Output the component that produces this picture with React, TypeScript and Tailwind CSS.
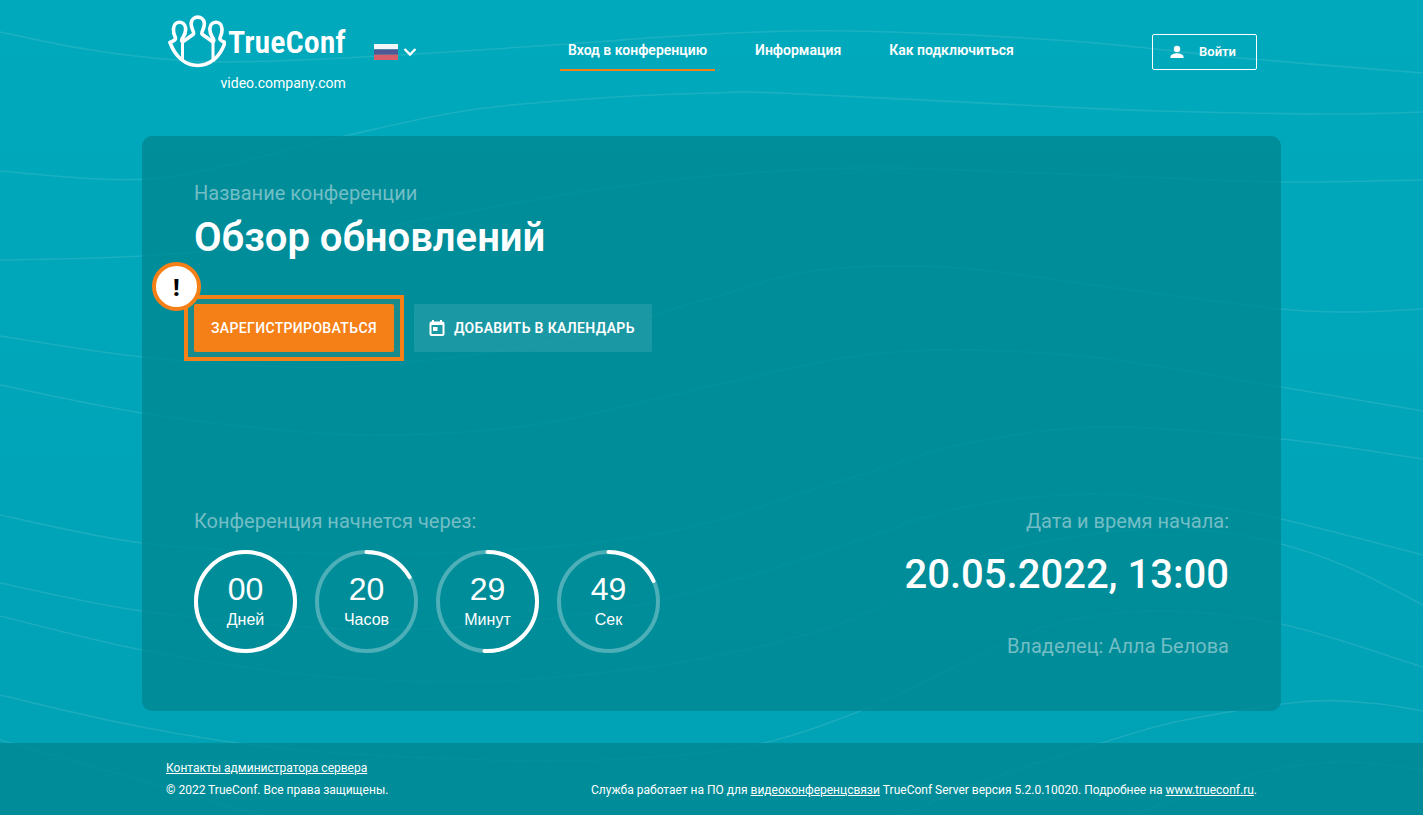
import React from "react";

type Point = [number, number];

const WAVES: Point[][] = [
  [[0, 32], [91, 50], [190, 61], [272, 61], [400, 55], [568, 44], [712, 34], [850, 31], [1070, 41], [1240, 58], [1423, 73]],
  [[0, 171], [97, 179], [160, 178], [220, 167], [345, 136], [470, 110], [600, 98], [711, 93], [780, 93], [1040, 106], [1160, 111], [1330, 114], [1423, 112]],
  [[0, 260], [142, 256], [290, 242], [450, 215], [580, 192], [711, 176], [850, 168], [960, 170], [1140, 177], [1281, 182], [1423, 180]],
  [[0, 336], [142, 357], [300, 367], [420, 361], [560, 340], [711, 298], [800, 273], [890, 266], [980, 270], [1130, 290], [1281, 309], [1350, 312], [1423, 309]],
  [[0, 385], [142, 413], [280, 430], [400, 435], [540, 424], [711, 386], [850, 357], [960, 350], [1100, 358], [1281, 387], [1423, 411]],
  [[0, 515], [142, 543], [300, 553], [450, 553], [600, 542], [711, 522], [850, 478], [960, 445], [1100, 427], [1281, 439], [1423, 459]],
  [[0, 583], [142, 611], [320, 628], [450, 628], [600, 612], [711, 587], [830, 550], [960, 508], [1100, 494], [1200, 505], [1281, 519], [1423, 555]],
  [[0, 616], [142, 650], [300, 674], [450, 682], [570, 676], [711, 657], [850, 620], [970, 560], [1100, 533], [1200, 530], [1281, 544], [1350, 568], [1423, 605]],
  [[0, 695], [142, 727], [300, 750], [530, 761], [680, 755], [768, 742], [860, 711], [960, 665], [1050, 625], [1160, 611], [1281, 624], [1423, 667]],
  [[0, 740], [140, 780], [260, 815]],
  [[900, 815], [1000, 775], [1105, 742], [1180, 721], [1300, 702], [1370, 703], [1423, 711]],
  [[1130, 815], [1250, 775], [1340, 762], [1423, 770]],
];

function smoothPath(points: Point[]): string {
  let d = `M${points[0][0]} ${points[0][1]}`;
  for (let i = 0; i < points.length - 1; i++) {
    const a = points[Math.max(i - 1, 0)];
    const b = points[i];
    const c = points[i + 1];
    const e = points[Math.min(i + 2, points.length - 1)];
    d += `C${b[0] + (c[0] - a[0]) / 6} ${b[1] + (c[1] - a[1]) / 6} ${c[0] - (e[0] - b[0]) / 6} ${c[1] - (e[1] - b[1]) / 6} ${c[0]} ${c[1]}`;
  }
  return d;
}

function Waves() {
  return (
    <svg
      className="absolute inset-0 -z-10 h-full w-full"
      viewBox="0 0 1423 815"
      preserveAspectRatio="none"
      fill="none"
      stroke="#ffffff"
      strokeOpacity="0.1"
      strokeWidth="1.6"
      aria-hidden="true"
    >
      {WAVES.map((points, i) => (
        <path key={i} d={smoothPath(points)} />
      ))}
    </svg>
  );
}

function LogoMark() {
  return (
    <svg className="h-[54px] w-[60px]" viewBox="0 0 60 54" fill="none" stroke="#fff" strokeWidth="3.6" strokeLinejoin="round" aria-hidden="true">
      <path d="M16.500 27V46.500M47 27V46.500" strokeWidth="3" />
      <path d="M27 19.500 16.500 27C14.500 25 16 23.500 17.500 21.500C19.500 18.500 19.800 15 19.500 12.500C18.500 5.500 8.500 5.500 7.700 12.500C7.300 15 7.500 18.500 9 21.500C10.500 24.500 8.500 25.500 4 27.500C9.500 42 19.500 50.500 31.700 50.500C44 50.500 54 42 59 27.500C54.500 25.500 53 24.500 54.500 21.500C56 18.500 56.200 15 55.800 12.500C55 5.500 45 5.500 44 12.500C43.700 15 44 18.500 46 21.500C47.500 23.500 49 25 47 27L36.500 19.500C35 18.500 36 17 37 14.500C38 12 38.500 10 38.300 8C37.500 0.200 26 0.200 25.200 8C25 10 25.500 12 26.500 14.500C27.500 17 28.500 18.500 27 19.500Z" />
    </svg>
  );
}

function Header() {
  return (
    <header className="mx-auto flex w-full max-w-[1091px] items-start justify-between pt-3">
      <div className="flex items-start gap-7">
        <div className="flex flex-col items-end">
          <a href="#home" className="flex h-[59px] items-center gap-0.5 text-white">
            <LogoMark />
            <span className="font-['Roboto_Condensed','Liberation_Sans_Narrow',Roboto,sans-serif] text-[32px] font-semibold">TrueConf</span>
          </a>
          <span className="text-sm leading-6 text-white">video.company.com</span>
        </div>
        <button type="button" aria-label="Русский" className="mt-8 flex items-center gap-1 pr-3">
          <svg className="h-4 w-6" viewBox="0 0 24 16" aria-hidden="true">
            <path fill="#f2f6f6" d="M0 0h24v5.400H0z" />
            <path fill="#4d5a96" d="M0 5.400h24v5.200H0z" />
            <path fill="#d85f69" d="M0 10.600h24V16H0z" />
          </svg>
          <svg className="h-4 w-4" viewBox="0 0 16 16" fill="none" stroke="#fff" strokeWidth="2.400" aria-hidden="true">
            <path d="m2.500 5 5.500 5.500L13.500 5" />
          </svg>
        </button>
      </div>
      <nav className="flex gap-8 pt-7 text-sm font-semibold text-white">
        <a href="#join" className="border-b-2 border-[#f58018] px-2 pb-[9px]">Вход в конференцию</a>
        <a href="#info" className="px-2">Информация</a>
        <a href="#help" className="px-2">Как подключиться</a>
      </nav>
      <button type="button" className="mt-[22px] flex h-9 items-center gap-3.5 rounded-[2px] border border-white pr-5 pl-4 text-[13px] font-semibold text-white">
        <svg className="h-4 w-4" viewBox="0 0 16 16" fill="#fff" aria-hidden="true">
          <circle cx="8" cy="5" r="3.200" />
          <path d="M1.500 14v-1.500C1.500 10.500 5 9.200 8 9.200s6.500 1.300 6.500 3.300V14z" />
        </svg>
        Войти
      </button>
    </header>
  );
}

const TIMERS = [
  { value: "00", label: "Дней", fraction: 1 },
  { value: "20", label: "Часов", fraction: 0.168 },
  { value: "29", label: "Минут", fraction: 0.51 },
  { value: "49", label: "Сек", fraction: 0.182 },
];

function Timer({ value, label, fraction }: { value: string; label: string; fraction: number }) {
  return (
    <div className="relative flex h-[103px] w-[103px] flex-col items-center justify-center font-['Liberation_Sans',sans-serif] text-white">
      <svg className="absolute inset-0" viewBox="0 0 103 103" fill="none" strokeWidth="4" aria-hidden="true">
        <circle cx="51.500" cy="51.500" r="49.500" stroke="#fff" strokeOpacity="0.3" />
        <circle
          cx="51.500"
          cy="51.500"
          r="49.500"
          stroke="#fff"
          strokeLinecap="round"
          pathLength={100}
          strokeDasharray={`${fraction * 100} 100`}
          transform="rotate(-90 51.500 51.500)"
        />
      </svg>
      <span className="text-[32px] leading-9">{value}</span>
      <span className="text-base leading-[26px]">{label}</span>
    </div>
  );
}

function ConferenceCard() {
  return (
    <main className="mx-auto mt-[41px] flex w-full max-w-[1139px] grow flex-col justify-between rounded-[10px] bg-[#008792]/80 px-[52px] pt-[43px] pb-[51px]">
      <section>
        <p className="text-xl leading-7 text-[#73bec5]">Название конференции</p>
        <h1 className="mt-1.5 text-[40px] leading-[50px] font-semibold text-white">Обзор обновлений</h1>
        <div className="mt-[41px] flex gap-5">
          <div className="relative">
            <div className="absolute -top-[9px] -right-2.5 -bottom-[9px] -left-2.5 border-4 border-[#f58018] bg-[#f58018]/10" />
            <button type="button" className="relative h-12 rounded-[2px] bg-[#f58018] px-[17px] text-sm font-medium tracking-wide text-white">
              ЗАРЕГИСТРИРОВАТЬСЯ
            </button>
            <div className="absolute -top-[42px] -left-[42px] flex size-[49px] items-center justify-center rounded-full border-4 border-[#f58018] bg-white font-['Noto_Sans',sans-serif] text-2xl font-bold text-black">
              !
            </div>
          </div>
          <button type="button" className="flex h-12 items-center gap-2 rounded-[2px] bg-white/10 pr-[17px] pl-3.5 text-sm font-semibold tracking-wide text-white">
            <svg className="h-[18px] w-[18px]" viewBox="0 0 18 18" aria-hidden="true">
              <path
                fill="#fff"
                fillRule="evenodd"
                d="M4 1h2v1.500h6V1h2v1.500h.5A2 2 0 0 1 16.500 4.500v10.500a2 2 0 0 1-2 2h-11a2 2 0 0 1-2-2V4.500a2 2 0 0 1 2-2H4zM3.500 6v9h11V6zM5 8h4.500v4H5z"
              />
            </svg>
            ДОБАВИТЬ В КАЛЕНДАРЬ
          </button>
        </div>
      </section>
      <section className="flex items-end justify-between">
        <div>
          <p className="text-xl leading-7 text-[#73bec5]">Конференция начнется через:</p>
          <div className="mt-[15px] mb-[7px] flex gap-[18px]">
            {TIMERS.map((t) => (
              <Timer key={t.label} {...t} />
            ))}
          </div>
        </div>
        <div className="text-right">
          <p className="text-xl leading-7 text-[#73bec5]">Дата и время начала:</p>
          <p className="mt-[15px] text-[40px] leading-[50px] font-medium text-white">20.05.2022, 13:00</p>
          <p className="mt-8 text-xl leading-7 text-[#73bec5]">Владелец: Алла Белова</p>
        </div>
      </section>
    </main>
  );
}

function Footer() {
  return (
    <footer className="mt-8 bg-[#008792]/80 pt-3.5 pb-3.5 text-xs leading-[22px] text-white">
      <div className="mx-auto flex max-w-[1091px] items-end justify-between">
        <div>
          <a href="#contacts" className="underline">Контакты администратора сервера</a>
          <p>© 2022 TrueConf. Все права защищены.</p>
        </div>
        <p>
          Служба работает на ПО для <a href="#video" className="underline">видеоконференцсвязи</a> TrueConf Server версия 5.2.0.10020. Подробнее на{" "}
          <a href="#site" className="underline">www.trueconf.ru</a>.
        </p>
      </div>
    </footer>
  );
}

export default function App() {
  return (
    <div className="relative isolate flex min-h-screen flex-col bg-linear-to-b from-[#00a9bc] to-[#00a1b5] font-[Roboto,sans-serif]">
      <Waves />
      <Header />
      <ConferenceCard />
      <Footer />
    </div>
  );
}
